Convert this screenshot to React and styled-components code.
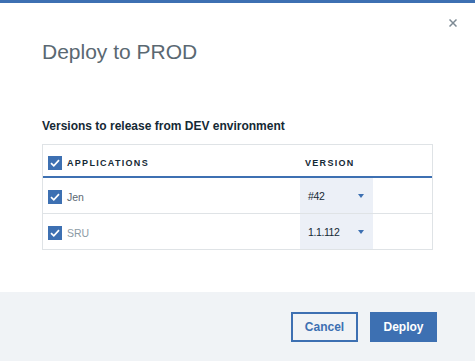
import styled, { createGlobalStyle } from "styled-components";

const GlobalStyle = createGlobalStyle`
  *, *::before, *::after { box-sizing: border-box; }
  body {
    margin: 0;
    background: #fff;
    font-family: "Liberation Sans", Arial, sans-serif;
  }
`;

const Modal = styled.div`
  width: 475px;
  height: 361px;
  display: flex;
  flex-direction: column;
  background: #fff;
  border-top: 3px solid #3d70b2;
`;

const CloseRow = styled.div`
  display: flex;
  justify-content: flex-end;
  padding: 16px 18px 0 0;
`;

const CloseButton = styled.button`
  width: 8px;
  height: 8px;
  padding: 0;
  border: 0;
  background: none;
  display: flex;
  cursor: pointer;
`;

const Title = styled.h2`
  margin: 13px 0 0;
  padding: 0 42px;
  font-size: 21px;
  line-height: 24px;
  font-weight: 400;
  color: #5a6872;
`;

const Body = styled.div`
  padding: 0 42px;
`;

const Subtitle = styled.h3`
  margin: 54px 0 0;
  font-size: 12px;
  line-height: 16px;
  font-weight: 700;
  color: #152935;
`;

const Table = styled.div`
  margin-top: 10px;
  width: 391px;
  border: 1px solid #dfe3e6;
  border-bottom: 0;
`;

const HeadRow = styled.div`
  display: grid;
  grid-template-columns: 257px 1fr;
  align-items: center;
  height: 33px;
  padding-top: 5px;
  border-bottom: 2px solid #3d70b2;
`;

const Row = styled.div`
  display: grid;
  grid-template-columns: 257px 1fr;
  align-items: stretch;
  height: 36px;
  border-bottom: 1px solid #dfe3e6;
`;

const NameCell = styled.div`
  display: flex;
  align-items: center;
  gap: 5px;
  padding-left: 5px;
  padding-top: ${(p) => (p.$head ? 0 : 3)}px;
`;

const HeadLabel = styled.span`
  font-size: 9px;
  font-weight: 700;
  letter-spacing: 1.3px;
  color: #152935;
  padding-left: ${(p) => p.$indent || 0}px;
`;

const AppName = styled.span`
  font-size: 10.5px;
  color: ${(p) => (p.$muted ? "#8c9ba5" : "#5a6872")};
`;

const Box = styled.span`
  width: 14px;
  height: 14px;
  background: #3d70b2;
  display: flex;
  align-items: center;
  justify-content: center;
  flex-shrink: 0;
`;

const Select = styled.div`
  width: 73px;
  height: 100%;
  background: #ecf0f7;
  display: flex;
  align-items: center;
  justify-content: space-between;
  padding: 0 9px 0 8px;
  font-size: 10.5px;
  color: #152935;
`;

const Version = styled.span`
  letter-spacing: -0.4px;
`;

const Caret = styled.span`
  width: 0;
  height: 0;
  border-left: 3.5px solid transparent;
  border-right: 3.5px solid transparent;
  border-top: 4px solid #3d70b2;
`;

const Footer = styled.div`
  margin-top: auto;
  height: 69px;
  background: #f0f3f6;
  display: flex;
  justify-content: flex-end;
  align-items: center;
  gap: 12px;
  padding-right: 38px;
`;

const Button = styled.button`
  width: 67px;
  height: 30px;
  font-family: "Liberation Sans", Arial, sans-serif;
  font-size: 12px;
  font-weight: 700;
  border: 2px solid #3d70b2;
  background: ${(p) => (p.$primary ? "#3d70b2" : "transparent")};
  color: ${(p) => (p.$primary ? "#fff" : "#3d70b2")};
  cursor: pointer;
  padding: 0;
`;

const Check = () => (
  <Box>
    <svg width="10" height="8" viewBox="0 0 10 8">
      <path d="M1 4.2 L3.8 6.8 L9 1.2" fill="none" stroke="#fff" strokeWidth="1.7" />
    </svg>
  </Box>
);

const apps = [
  { name: "Jen", version: "#42" },
  { name: "SRU", version: "1.1.112", muted: true },
];

export default function App() {
  return (
    <>
      <GlobalStyle />
      <Modal>
        <CloseRow>
          <CloseButton aria-label="Close">
            <svg width="8" height="8" viewBox="0 0 8 8">
              <path d="M0.5 0.5 L7.5 7.5 M7.5 0.5 L0.5 7.5" stroke="#7d8a94" strokeWidth="1.5" />
            </svg>
          </CloseButton>
        </CloseRow>
        <Title>Deploy to PROD</Title>
        <Body>
          <Subtitle>Versions to release from DEV environment</Subtitle>
          <Table>
            <HeadRow>
              <NameCell $head>
                <Check />
                <HeadLabel>APPLICATIONS</HeadLabel>
              </NameCell>
              <HeadLabel $indent={5}>VERSION</HeadLabel>
            </HeadRow>
            {apps.map((a) => (
              <Row key={a.name}>
                <NameCell>
                  <Check />
                  <AppName $muted={a.muted}>{a.name}</AppName>
                </NameCell>
                <Select>
                  <Version>{a.version}</Version>
                  <Caret />
                </Select>
              </Row>
            ))}
          </Table>
        </Body>
        <Footer>
          <Button>Cancel</Button>
          <Button $primary>Deploy</Button>
        </Footer>
      </Modal>
    </>
  );
}
